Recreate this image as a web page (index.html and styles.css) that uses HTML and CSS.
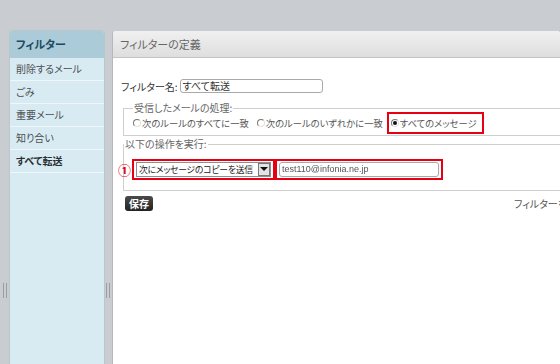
FILE: index.html
```html
<!DOCTYPE html>
<html lang="ja">
<head>
    <meta charset="UTF-8">
    <title>フィルターの定義</title>
    <link rel="stylesheet" href="styles.css">
</head>
<body>

<div class="layout">
    <div class="splitter splitter-left"><span class="grip"></span></div>

    <aside class="sidebar">
        <h2>フィルター</h2>
        <ul>
            <li>削除するメール</li>
            <li>ごみ</li>
            <li>重要メール</li>
            <li>知り合い</li>
            <li class="active">すべて転送</li>
        </ul>
    </aside>

    <div class="splitter splitter-mid"><span class="grip"></span></div>

    <main class="panel">
        <div class="panel-head">フィルターの定義</div>
        <div class="panel-body">
            <div class="name-row">
                <label>フィルター名:</label>
                <span class="text-input name-input">すべて転送</span>
            </div>

            <fieldset class="group">
                <legend>受信したメールの処理:</legend>
                <div class="radios">
                    <span class="radio-item"><span class="radio"></span>次のルールのすべてに一致</span>
                    <span class="radio-item"><span class="radio"></span>次のルールのいずれかに一致</span>
                    <span class="radio-item marked"><span class="radio checked"></span>すべてのメッセージ</span>
                </div>
            </fieldset>

            <fieldset class="group actions">
                <legend>以下の操作を実行:</legend>
                <div class="action-row">
                    <span class="step">①</span>
                    <span class="marked">
                        <span class="select"><span class="select-text">次にメッセージのコピーを送信</span><span class="select-btn"></span></span>
                    </span>
                    <span class="marked">
                        <span class="text-input mail-input">test110@infonia.ne.jp</span>
                    </span>
                </div>
            </fieldset>

            <div class="save-row">
                <button class="save-btn">保存</button>
                <span class="note">フィルターを保存</span>
            </div>
        </div>
    </main>
</div>

</body>
</html>
```

FILE: styles.css
```css
body {
    margin: 0;
    background-color: #c9cdd1;
    font-family: "Noto Sans CJK JP", "Liberation Sans", sans-serif;
    font-size: 10px;
    font-feature-settings: "palt";
    color: #333;
    overflow: hidden;
}
.layout {
    display: flex;
    height: 333px;
    padding-top: 31px;
}
.splitter {
    flex-shrink: 0;
    display: flex;
    align-items: flex-start;
    padding-top: 252px;
    box-sizing: border-box;
}
.splitter-left {
    width: 10px;
    padding-left: 3px;
}
.splitter-mid {
    width: 9px;
    padding-left: 2px;
}
.grip {
    width: 2px;
    height: 15px;
    border-left: 1px solid #9a9ea2;
    border-right: 1px solid #9a9ea2;
}
.sidebar {
    width: 94px;
    flex-shrink: 0;
    background-color: #d9ebf2;
    border-radius: 3px 3px 0 0;
    box-shadow: 0 0 0 1px #b9c7cd;
}
.sidebar h2 {
    margin: 0;
    height: 27px;
    line-height: 27px;
    padding-left: 6px;
    font-size: 11px;
    color: #1d4a63;
    background-color: #aacbd7;
    border-radius: 3px 3px 0 0;
}
.sidebar ul {
    list-style: none;
    margin: 0;
    padding: 0;
}
.sidebar li {
    height: 22px;
    line-height: 22px;
    padding-left: 6px;
    color: #4a4f53;
    border-bottom: 1px solid #f0f7fa;
}
.sidebar li.active {
    font-weight: bold;
    color: #2a2f33;
}
.panel {
    flex: 1;
    background-color: #fff;
    border-radius: 3px 3px 0 0;
    box-shadow: -1px 0 0 #b4b8bc;
    overflow: hidden;
}
.panel-head {
    height: 26px;
    line-height: 27px;
    padding-left: 7px;
    font-size: 11px;
    color: #666;
    background: linear-gradient(#f0f0f0, #dedede);
    border-bottom: 1px solid #c4c4c4;
}
.panel-body {
    width: 466px;
    padding: 21px 0 0 8px;
}
.name-row {
    display: flex;
    align-items: center;
    gap: 2px;
    height: 14px;
}
.name-row label {
    color: #333;
}
.text-input {
    display: inline-block;
    box-sizing: border-box;
    border: 1px solid #a9a9a9;
    border-radius: 3px;
    background-color: #fff;
    line-height: 12px;
    padding: 0 2px;
}
.name-input {
    width: 143px;
    height: 14px;
}
.group {
    margin: 9px 0 0 2px;
    padding: 0 9px;
    border: 1px solid #cfcfcf;
    border-right: none;
}
.group legend {
    padding: 0 1px;
    color: #666;
    line-height: 12px;
}
.radios {
    display: flex;
    align-items: center;
    gap: 8px;
    height: 18px;
    margin-bottom: 3px;
    font-size: 9.3px;
    color: #555;
}
.radio-item {
    display: flex;
    align-items: center;
    gap: 1px;
}
.radio {
    width: 8px;
    height: 8px;
    box-sizing: border-box;
    border-radius: 50%;
    border: 1px solid;
    border-color: #777 #e2e2e2 #e2e2e2 #777;
    background-color: #fff;
    display: flex;
    align-items: center;
    justify-content: center;
}
.radio.checked::after {
    content: "";
    width: 4px;
    height: 4px;
    border-radius: 50%;
    background-color: #111;
}
.marked {
    display: inline-flex;
    align-items: center;
    border: 2px solid #e60012;
    padding: 1px 2px;
}
.radios .marked {
    padding: 2px 5px 2px 2px;
    margin-left: -4px;
}
.actions {
    margin-top: 2px;
    padding-left: 0;
}
.action-row {
    display: flex;
    align-items: center;
    height: 22px;
    margin: 8px 0 10px -6px;
}
.step {
    color: #e60012;
    font-size: 13px;
    font-weight: bold;
    width: 14px;
}
.select {
    display: inline-flex;
    align-items: center;
    justify-content: space-between;
    box-sizing: border-box;
    width: 135px;
    height: 15px;
    border: 1px solid #8e8e8e;
    padding-left: 2px;
    color: #222;
    font-size: 8.8px;
    letter-spacing: -0.2px;
    white-space: nowrap;
}
.select-btn {
    width: 12px;
    height: 13px;
    box-sizing: border-box;
    border: 1px solid #777;
    background-color: #e4e4e4;
    display: flex;
    align-items: center;
    justify-content: center;
}
.select-btn::after {
    content: "";
    border-left: 4px solid transparent;
    border-right: 4px solid transparent;
    border-top: 4px solid #111;
}
.mail-input {
    width: 160px;
    height: 15px;
    border-radius: 3px;
    font-family: "Liberation Sans", sans-serif;
    font-size: 9px;
    color: #555;
    filter: blur(0.4px);
}
.save-row {
    display: flex;
    align-items: center;
    justify-content: space-between;
    margin: 5px 0 0 4px;
}
.save-btn {
    font-family: inherit;
    font-size: 10px;
    font-weight: bold;
    color: #fff;
    background: linear-gradient(#4a4a4a, #222);
    border: none;
    border-radius: 3px;
    height: 15px;
    width: 28px;
    padding: 0;
    line-height: 15px;
}
.note {
    color: #555;
    white-space: nowrap;
}
```
